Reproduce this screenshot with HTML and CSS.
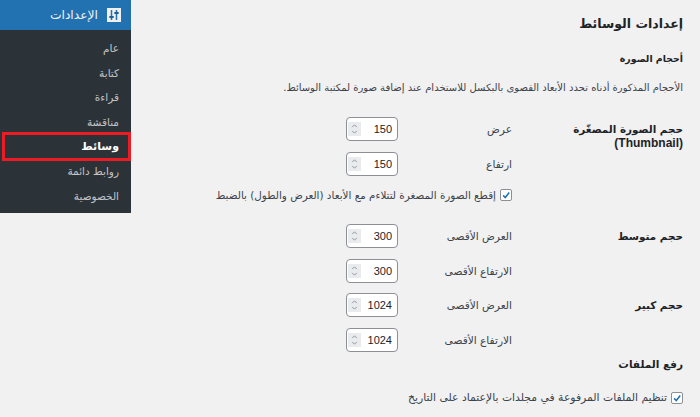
FILE: index.html
```html
<!DOCTYPE html>
<html lang="ar">
<head>
  <meta charset="UTF-8">
  <title>إعدادات الوسائط</title>
  <link rel="stylesheet" href="styles.css">
</head>
<body>

  <!-- Sidebar -->
  <aside class="side">
    <div class="side__head">
      <svg class="side__icon" viewBox="0 0 14 14" width="14" height="14">
        <rect width="14" height="14" fill="#f0f0f1"/>
        <path d="M4.500 2V12M2.500 9H6.500M9.500 2V12M7.500 5H11.500" stroke="#2271b1" stroke-width="1.500" fill="none"/>
        <path d="M2.500 8H6.500V10H2.500ZM7.500 4H11.500V6H7.500Z" fill="#1d5f96"/>
      </svg>
      <span>الإعدادات</span>
    </div>
    <ul class="side__list">
      <li>عام</li>
      <li>كتابة</li>
      <li>قراءة</li>
      <li>مناقشة</li>
      <li class="is-current">وسائط</li>
      <li>روابط دائمة</li>
      <li>الخصوصية</li>
    </ul>
  </aside>

  <!-- Settings -->
  <main class="main">
    <h1>إعدادات الوسائط</h1>
    <h2>أحجام الصورة</h2>
    <p class="intro">الأحجام المذكورة أدناه تحدد الأبعاد القصوى بالبكسل للاستخدام عند إضافة صورة لمكتبة الوسائط.</p>

    <div class="group group--thumb">
      <div class="group__title">حجم الصورة المصغّرة <span class="latin">(Thumbnail)</span></div>
      <div class="fields">
        <div class="field"><label>عرض</label><span class="num"><svg class="spin" viewBox="0 0 14 14"><path d="M4.500 5L7 2.500L9.500 5M4.500 9L7 11.500L9.500 9"/></svg><input value="150"></span></div>
        <div class="field"><label>ارتفاع</label><span class="num"><svg class="spin" viewBox="0 0 14 14"><path d="M4.500 5L7 2.500L9.500 5M4.500 9L7 11.500L9.500 9"/></svg><input value="150"></span></div>
        <div class="check check--crop"><span class="box"><svg viewBox="0 0 14 14"><path d="M3 7.500L6 10.500L11.500 3.500"/></svg></span>إقطع الصورة المصغرة لتتلاءم مع الأبعاد (العرض والطول) بالضبط</div>
      </div>
    </div>

    <div class="group group--mid">
      <div class="group__title">حجم متوسط</div>
      <div class="fields">
        <div class="field"><label>العرض الأقصى</label><span class="num"><svg class="spin" viewBox="0 0 14 14"><path d="M4.500 5L7 2.500L9.500 5M4.500 9L7 11.500L9.500 9"/></svg><input value="300"></span></div>
        <div class="field"><label>الارتفاع الأقصى</label><span class="num"><svg class="spin" viewBox="0 0 14 14"><path d="M4.500 5L7 2.500L9.500 5M4.500 9L7 11.500L9.500 9"/></svg><input value="300"></span></div>
      </div>
    </div>

    <div class="group group--big">
      <div class="group__title">حجم كبير</div>
      <div class="fields">
        <div class="field"><label>العرض الأقصى</label><span class="num"><svg class="spin" viewBox="0 0 14 14"><path d="M4.500 5L7 2.500L9.500 5M4.500 9L7 11.500L9.500 9"/></svg><input value="1024"></span></div>
        <div class="field"><label>الارتفاع الأقصى</label><span class="num"><svg class="spin" viewBox="0 0 14 14"><path d="M4.500 5L7 2.500L9.500 5M4.500 9L7 11.500L9.500 9"/></svg><input value="1024"></span></div>
      </div>
    </div>

    <h2 class="upload">رفع الملفات</h2>
    <div class="check check--upload"><span class="box"><svg viewBox="0 0 14 14"><path d="M3 7.500L6 10.500L11.500 3.500"/></svg></span>تنظيم الملفات المرفوعة في مجلدات بالإعتماد على التاريخ</div>
  </main>

</body>
</html>
```

FILE: styles.css
```css
* {
  box-sizing: border-box;
}

html, body {
  height: 100%;
}

body {
  margin: 0;
  display: flex;
  align-items: flex-start;
  overflow: hidden;
  background: #f1f1f1;
  font-family: "DejaVu Sans", sans-serif;
  font-size: 10px;
  color: #3c434a;
}

/* Sidebar */
.side {
  width: 131px;
  flex: none;
  background: #2c3338;
  direction: rtl;
}

.side__head {
  height: 30px;
  padding-right: 10px;
  display: flex;
  align-items: center;
  gap: 9px;
  background: #2271b1;
  color: #f0f0f1;
  font-size: 12.300px;
}

.side__list {
  list-style: none;
  margin: 0;
  padding: 6px 0 4px;
}

.side__list li {
  height: 24.600px;
  line-height: 24px;
  padding-right: 12px;
  color: #c3c4c7;
  font-size: 10.500px;
}

.side__list .is-current {
  color: #fff;
  font-weight: bold;
  font-size: 11px;
  outline: 3px solid #ed1c24;
  outline-offset: -3px;
  margin-left: 2px;
  margin-right: 0;
  padding-right: 12px;
  height: 29px;
  margin-top: -2px;
  margin-bottom: -2px;
  line-height: 29px;
}

/* Main */
.main {
  flex: 1;
  padding-right: 17px;
  direction: rtl;
}

h1 {
  margin: 14px 0 0;
  font-size: 12.500px;
  line-height: 20px;
  color: #1d2327;
}

h2 {
  margin: 17px 0 0;
  font-size: 9.400px;
  line-height: 16px;
  color: #1d2327;
}

.intro {
  margin: 13px 0 0;
  line-height: 16px;
  font-size: 10px;
  white-space: nowrap;
}

.group {
  display: flex;
}

.group--thumb {
  margin-top: 20px;
}

.group--mid {
  margin-top: 22px;
}

.group--big {
  margin-top: 8px;
}

.group__title {
  width: 171px;
  flex: none;
  padding-left: 30px;
  padding-top: 6px;
  font-size: 10.400px;
  font-weight: bold;
  line-height: 14px;
  color: #1d2327;
}

.latin {
  font-family: "Liberation Sans", sans-serif;
  font-size: 12px;
}

.fields {
  display: flex;
  flex-direction: column;
  gap: 9px;
}

.field {
  display: flex;
  align-items: center;
  height: 26px;
}

.field label {
  width: 114px;
  font-size: 10.600px;
}

/* Number input with its spin arrows */
.num {
  width: 52px;
  height: 24px;
  padding: 0 5px 0 1px;
  display: flex;
  align-items: center;
  flex-direction: row-reverse;
  background: #fff;
  border: 1px solid #8c8f94;
  border-radius: 4px;
}

.num input {
  width: 100%;
  min-width: 0;
  padding: 0 0 0 2px;
  border: 0;
  outline: 0;
  background: none;
  direction: ltr;
  text-align: right;
  font: 11px "Liberation Sans", sans-serif;
  color: #1d2327;
}

.spin {
  width: 13px;
  height: 14px;
  flex: none;
  background: #e9ebee;
}

.spin path {
  fill: none;
  stroke: #8c8f94;
  stroke-width: 1;
}

/* Checkbox rows */
.check {
  display: flex;
  align-items: center;
  gap: 4px;
  white-space: nowrap;
}

.check--crop {
  margin-top: 3px;
  font-size: 10.400px;
}

.check--upload {
  margin-top: 19px;
  font-size: 10.800px;
}

.box {
  width: 12px;
  height: 12px;
  flex: none;
  display: block;
  background: #fff;
  border: 1px solid #8c8f94;
  border-radius: 2px;
}

.box svg {
  display: block;
  width: 10px;
  height: 10px;
}

.box path {
  fill: none;
  stroke: #2271b1;
  stroke-width: 2.200;
}

.upload {
  margin-top: 3px;
  font-size: 10.500px;
}
```
